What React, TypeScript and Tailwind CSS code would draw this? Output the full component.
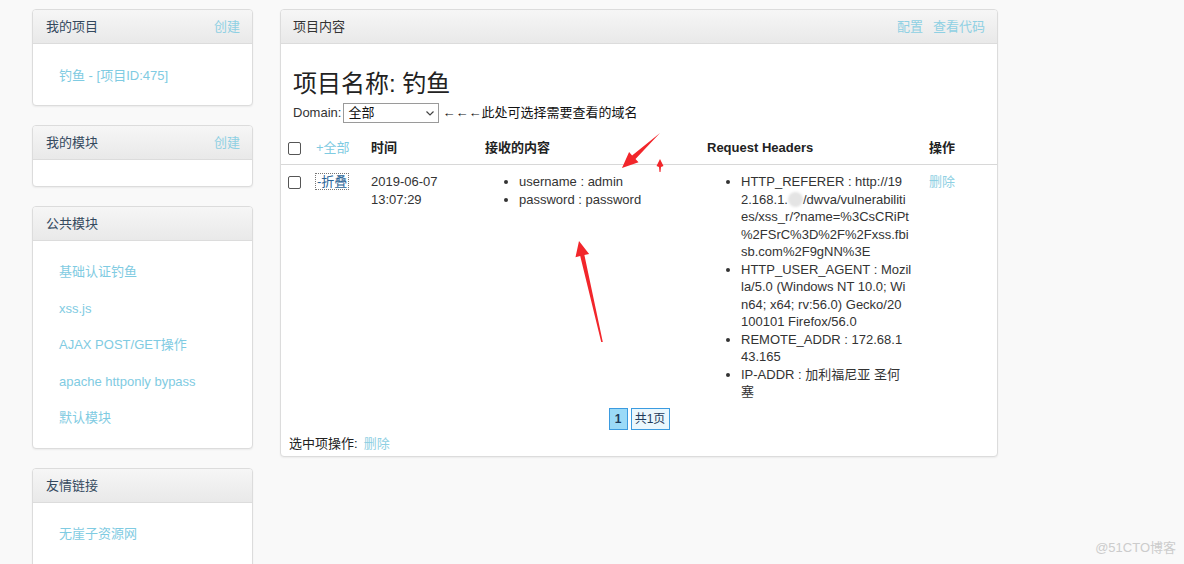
import React from "react";

const font = { fontFamily: '"Liberation Sans", Arial, "Noto Sans CJK SC", sans-serif' };

function SidePanel({ title, action, children, bodyClass }: { title: string; action?: string; children?: React.ReactNode; bodyClass: string }) {
  return (
    <div className="bg-white border border-[#dcdcdc] rounded-[4px] shadow-[0_1px_2px_rgba(0,0,0,0.06)] overflow-hidden">
      <div className="h-[34px] flex items-center justify-between pl-[13px] pr-[12px] bg-gradient-to-b from-[#f6f6f6] to-[#e9e9e9] border-b border-[#dcdcdc] text-[13px]">
        <span className="text-[#34495e]">{title}</span>
        {action && <span className="text-[#8fd0e3]">{action}</span>}
      </div>
      <div className={bodyClass}>{children}</div>
    </div>
  );
}

function Checkbox() {
  return <span className="inline-block w-[13px] h-[13px] border border-[#555] rounded-[2px] bg-white" />;
}

export default function App() {
  const links = ["基础认证钓鱼", "xss.js", "AJAX POST/GET操作", "apache httponly bypass", "默认模块"];
  return (
    <div style={font} className="relative w-[1184px] h-[564px] overflow-hidden bg-[#f9f9f9] text-[#333] text-[13px] flex items-start gap-[27px] pl-[32px] pt-[9px]">
      {/* left column */}
      <div className="w-[221px] flex flex-col gap-[19px] shrink-0">
        <SidePanel title="我的项目" action="创建" bodyClass="h-[61px] pt-[23px] pl-[26px]">
          <div className="leading-[18px] text-[#7fcbe2]">钓鱼 - [项目ID:475]</div>
        </SidePanel>
        <SidePanel title="我的模块" action="创建" bodyClass="h-[26px]" />
        <SidePanel title="公共模块" bodyClass="pt-[22px] pb-[21px] pl-[26px] flex flex-col gap-[18.5px]">
          {links.map((l) => (
            <div key={l} className="leading-[18px] text-[#7fcbe2]">{l}</div>
          ))}
        </SidePanel>
        <SidePanel title="友情链接" bodyClass="pt-[22px] pb-[30px] pl-[26px]">
          <div className="leading-[18px] text-[#7fcbe2]">无崖子资源网</div>
        </SidePanel>
      </div>

      {/* main panel */}
      <div className="w-[718px] h-[448px] shrink-0 bg-white border border-[#dcdcdc] rounded-[4px] shadow-[0_1px_2px_rgba(0,0,0,0.06)] overflow-hidden flex flex-col">
        <div className="h-[34px] shrink-0 flex items-center justify-between pl-[12px] pr-[12px] bg-gradient-to-b from-[#f6f6f6] to-[#e9e9e9] border-b border-[#dcdcdc]">
          <span className="text-[#333]">项目内容</span>
          <div className="flex gap-[10px] text-[#8fd0e3]">
            <span>配置</span>
            <span>查看代码</span>
          </div>
        </div>
        <div className="flex flex-col shrink-0">
          <div className="px-[12px] pt-[25px] text-[24px] leading-[30px] text-[#222]">项目名称: 钓鱼</div>
          <div className="px-[12px] mt-[4px] flex items-center h-[20px]">
            <span className="text-[#333]">Domain:</span>
            <div className="ml-[2px] w-[96px] h-[20px] border border-[#9a9a9a] flex items-center justify-between pl-[4px] pr-[3px] bg-white">
              <span className="text-[#111]">全部</span>
              <svg width="10" height="10" viewBox="0 0 10 10"><path d="M1.5 3.5 L5 7 L8.5 3.5" fill="none" stroke="#444" strokeWidth="1.2" /></svg>
            </div>
            <span className="ml-[3px] text-[#111]">←←←此处可选择需要查看的域名</span>
          </div>

          {/* table */}
          <div className="mt-[9px] grid grid-cols-[27px_55px_114px_222px_222px_76px] h-[33px] items-center border-b border-[#d8d8d8]">
            <div className="pl-[7px] flex items-center"><Checkbox /></div>
            <div className="pl-[8px] text-[#7fcbe2]">+全部</div>
            <div className="pl-[8px] font-bold text-[#222]">时间</div>
            <div className="pl-[8px] font-bold text-[#222]">接收的内容</div>
            <div className="pl-[8px] font-bold text-[#222]">Request Headers</div>
            <div className="pl-[8px] font-bold text-[#222]">操作</div>
          </div>
          <div className="grid grid-cols-[27px_55px_114px_222px_222px_76px] pt-[8px] leading-[17.5px]">
            <div className="pl-[7px] pt-[3px]"><Checkbox /></div>
            <div className="pl-[8px]">
              <span className="text-[#2a6496] outline outline-1 outline-dotted outline-[#777] px-[1px]">-折叠</span>
            </div>
            <div className="pl-[8px] leading-[18px]">
              <div>2019-06-07</div>
              <div>13:07:29</div>
            </div>
            <div className="pl-[8px]">
              <ul className="list-disc pl-[34px]">
                <li>username : admin</li>
                <li>password : password</li>
              </ul>
            </div>
            <div className="pl-[8px]">
              <ul className="list-disc pl-[34px] whitespace-nowrap">
                <li>
                  <span className="block">HTTP_REFERER : http://19</span>
                  <span className="block">
                    2.168.1.
                    <span className="inline-block w-[15px] h-[15px] align-[-3px] rounded-full bg-[#e4e4e4] blur-[1px]" />
                    /dwva/vulnerabiliti
                  </span>
                  <span className="block">es/xss_r/?name=%3CsCRiPt</span>
                  <span className="block">%2FSrC%3D%2F%2Fxss.fbi</span>
                  <span className="block">sb.com%2F9gNN%3E</span>
                </li>
                <li>
                  <span className="block">HTTP_USER_AGENT : Mozil</span>
                  <span className="block">la/5.0 (Windows NT 10.0; Wi</span>
                  <span className="block">n64; x64; rv:56.0) Gecko/20</span>
                  <span className="block">100101 Firefox/56.0</span>
                </li>
                <li>
                  <span className="block">REMOTE_ADDR : 172.68.1</span>
                  <span className="block">43.165</span>
                </li>
                <li>
                  <span className="block">IP-ADDR : 加利福尼亚 圣何</span>
                  <span className="block">塞</span>
                </li>
              </ul>
            </div>
            <div className="pl-[8px] text-[#8fd0e3]">删除</div>
          </div>

          {/* pagination */}
          <div className="mt-[7px] flex justify-center gap-[3px] text-[12px]">
            <div className="w-[19px] h-[22px] flex items-center justify-center bg-[#9bdaf7] border border-[#3b9be0] font-bold text-[#1e3a5a]">1</div>
            <div className="w-[39px] h-[22px] flex items-center justify-center bg-[#eaf7fd] border border-[#3b9be0] text-[#1e3a5a]">共1页</div>
          </div>
          <div className="px-[8px] mt-[5px] leading-[18px]">
            <span className="text-[#222]">选中项操作:</span>
            <span className="ml-[6px] text-[#8fd0e3]">删除</span>
          </div>
        </div>
      </div>

      {/* annotation arrows */}
      <svg className="absolute left-0 top-0 pointer-events-none" width="1184" height="564" viewBox="0 0 1184 564">
        <polygon points="660,133 635.5,159 638.5,162.3 622,168 629.1,152.1 632.1,155.4" fill="#f2262b" />
        <polygon points="660,159 663.5,166 661,167 660.5,172 659.5,172 659,167 656.5,166" fill="#f2262b" />
        <polygon points="602.8,342 584.4,255.1 589.1,254 579,241 575.5,257.2 580.2,256.1 601.2,342" fill="#f2262b" />
      </svg>

      <div className="absolute right-[8px] bottom-[7px] text-[13px] text-[#cccccc]">@51CTO博客</div>
    </div>
  );
}
